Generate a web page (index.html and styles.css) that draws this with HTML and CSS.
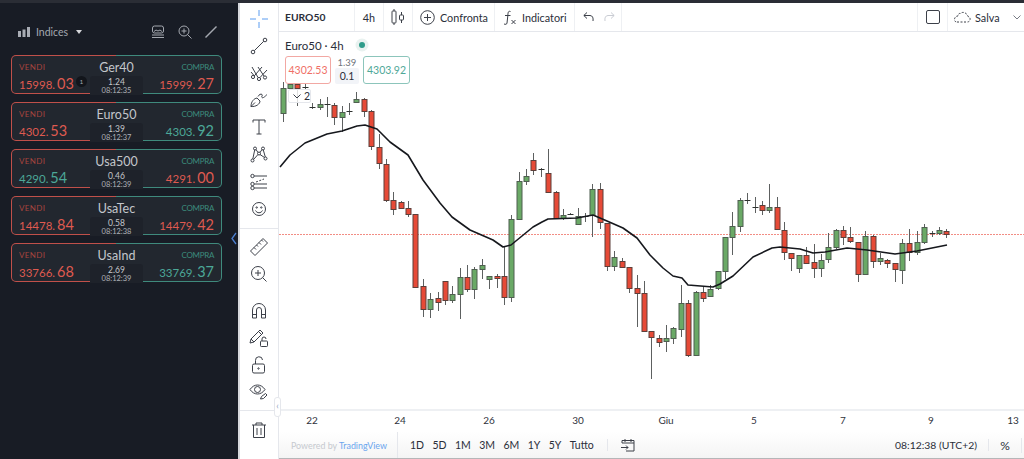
FILE: index.html
```html
<!DOCTYPE html>
<html lang="en">
<head>
  <meta charset="UTF-8">
  <title>Indices | Euro50</title>
  <link rel="stylesheet" href="styles.css">
</head>
<body>
  <div class="topstrip"></div>
  <div class="app">

    <!-- quotes panel -->
    <aside class="panel">
      <div class="panel-head">
        <svg class="bars" width="12" height="10" viewBox="0 0 12 10"><path d="M0 4h3v6H0zM4.5 2.5h3V10h-3zM9 0h3v10H9z"/></svg>
        <span class="panel-title">Indices</span>
        <span class="caret"></span>
        <div class="panel-icons">
          <svg class="dark-icon" width="14" height="14" viewBox="0 0 14 14"><rect x="1.5" y="1" width="11" height="7" rx="2"/><path d="M3 6.500l2-1.500 2 1 2-1 2 1.500M1 10h12M1 12.500h12"/></svg>
          <svg class="dark-icon" width="14" height="14" viewBox="0 0 14 14"><circle cx="6" cy="6" r="5"/><path d="M6 3.500v5M3.500 6h5M9.500 9.500l4 4"/></svg>
          <svg class="dark-icon" width="12" height="12" viewBox="0 0 12 12"><path d="M.5 11.500l11-11" stroke-width="1.400"/></svg>
        </div>
      </div>

      <div class="card">
        <div class="side">
          <span class="label sell">VENDI</span>
          <span class="price down">15998. <b>03</b></span>
        </div>
        <div class="mid">
          <span class="name">Ger40</span>
          <div class="tab"><span class="spread">1.24</span><span class="clock">08:12:35</span></div>
        </div>
        <div class="side right">
          <span class="label buy">COMPRA</span>
          <span class="price down">15999. <b>27</b></span>
        </div>
        <span class="badge">1</span>
      </div>

      <div class="card">
        <div class="side">
          <span class="label sell">VENDI</span>
          <span class="price down">4302. <b>53</b></span>
        </div>
        <div class="mid">
          <span class="name">Euro50</span>
          <div class="tab"><span class="spread">1.39</span><span class="clock">08:12:37</span></div>
        </div>
        <div class="side right">
          <span class="label buy">COMPRA</span>
          <span class="price up">4303. <b>92</b></span>
        </div>
      </div>

      <div class="card">
        <div class="side">
          <span class="label sell">VENDI</span>
          <span class="price up">4290. <b>54</b></span>
        </div>
        <div class="mid">
          <span class="name">Usa500</span>
          <div class="tab"><span class="spread">0.46</span><span class="clock">08:12:39</span></div>
        </div>
        <div class="side right">
          <span class="label buy">COMPRA</span>
          <span class="price down">4291. <b>00</b></span>
        </div>
      </div>

      <div class="card">
        <div class="side">
          <span class="label sell">VENDI</span>
          <span class="price down">14478. <b>84</b></span>
        </div>
        <div class="mid">
          <span class="name">UsaTec</span>
          <div class="tab"><span class="spread">0.58</span><span class="clock">08:12:38</span></div>
        </div>
        <div class="side right">
          <span class="label buy">COMPRA</span>
          <span class="price down">14479. <b>42</b></span>
        </div>
      </div>

      <div class="card">
        <div class="side">
          <span class="label sell">VENDI</span>
          <span class="price down">33766. <b>68</b></span>
        </div>
        <div class="mid">
          <span class="name">UsaInd</span>
          <div class="tab"><span class="spread">2.69</span><span class="clock">08:12:39</span></div>
        </div>
        <div class="side right">
          <span class="label buy">COMPRA</span>
          <span class="price up">33769. <b>37</b></span>
        </div>
      </div>

      <svg class="panel-toggle" width="6" height="13" viewBox="0 0 6 13"><path d="M5 1L1 6.500 5 12"/></svg>
    </aside>

    <!-- drawing tools -->
    <nav class="tools">
      <div class="tool-group first">
        <div class="tool"><svg class="icon blue" width="18" height="18" viewBox="0 0 18 18"><path d="M9 0v6M9 12v6M0 9h6M12 9h6"/></svg></div>
        <div class="tool"><svg class="icon" width="18" height="18" viewBox="0 0 18 18"><circle cx="3" cy="15" r="1.800"/><circle cx="15" cy="3" r="1.800"/><path d="M4.300 13.700L13.700 4.300"/></svg></div>
        <div class="tool"><svg class="icon" width="18" height="18" viewBox="0 0 18 18"><circle cx="3" cy="13" r="1.600"/><circle cx="9" cy="15" r="1.600"/><circle cx="15" cy="13.500" r="1.600"/><path d="M4 11.500L1 8M4.200 12L12 3M8 13.500L2 3M10 13.500L17 6M14 12L8 3"/></svg></div>
        <div class="tool"><svg class="icon" width="18" height="18" viewBox="0 0 18 18"><path d="M1 15.500c0-5 3-8 6-8.500l3 3c0 3-4 6-9 5.500zM1 15.500l4-4M8 5.500c1-2 3-3 4-2s-1 2 0 3 3-1 5-3"/></svg></div>
        <div class="tool"><svg class="icon" width="18" height="18" viewBox="0 0 18 18"><path d="M3 4.500V2h12v2.500M9 2v14M6.500 16h5"/></svg></div>
        <div class="tool"><svg class="icon" width="18" height="18" viewBox="0 0 18 18"><circle cx="5" cy="2.500" r="1.500"/><circle cx="13" cy="2.500" r="1.500"/><circle cx="2.500" cy="14.500" r="1.500"/><circle cx="15.500" cy="12.500" r="1.500"/><circle cx="9" cy="7.500" r="1.500"/><path d="M4.700 4L2.800 13M6 3.500l2 3M12 3.500l-2 3M13.300 4l2 7M8 8.500l-4.500 5M10 8.500l4.500 3"/></svg></div>
        <div class="tool"><svg class="icon" width="18" height="18" viewBox="0 0 18 18"><circle cx="2.500" cy="3" r="1.700"/><circle cx="2.500" cy="11" r="1.700"/><circle cx="2.500" cy="15" r="1.700"/><path d="M4.200 3H17M4.200 11H17M4.200 15H17"/><path d="M6 9l8-3" stroke-dasharray="2 1.500"/></svg></div>
        <div class="tool"><svg class="icon" width="18" height="18" viewBox="0 0 18 18"><circle cx="9" cy="9" r="6.500"/><circle cx="6.700" cy="7.500" r=".7"/><circle cx="11.300" cy="7.500" r=".7"/><path d="M5.500 10.500c1.500 3 5.500 3 7 0"/></svg></div>
      </div>
      <div class="tool-group second">
        <div class="tool"><svg class="icon" width="20" height="20" viewBox="0 0 20 20"><path d="M1.500 14L14 1.500l4.500 4.500L6 18.500zM5 10.500l2 2M7.500 8l1.500 1.500M10 5.500l2 2M12.500 3l1.500 1.500"/></svg></div>
        <div class="tool"><svg class="icon" width="18" height="18" viewBox="0 0 18 18"><circle cx="8" cy="8" r="6.500"/><path d="M8 5v6M5 8h6M12.800 12.800l3.700 3.700"/></svg></div>
      </div>
      <div class="tool-group third">
        <div class="tool"><svg class="icon" width="16" height="18" viewBox="0 0 16 18"><path d="M1.500 16V8a6.500 6.500 0 0 1 13 0v8h-4V8a2.500 2.500 0 0 0-5 0v8zM1.500 12.500h4M10.500 12.500h4"/></svg></div>
        <div class="tool"><svg class="icon" width="20" height="20" viewBox="0 0 20 20"><path d="M1 15l1-4L11 2l3 3-9 9zM2 11l3 3M9.500 3.500l3 3"/><rect x="11.500" y="13" width="7" height="5.500" rx=".8"/><path d="M13 13v-2a2 2 0 0 1 4 0"/></svg></div>
        <div class="tool"><svg class="icon" width="16" height="18" viewBox="0 0 16 18"><rect x="1.500" y="8" width="12" height="9" rx="1.500"/><path d="M4.500 8V4.500a3.500 3.500 0 0 1 7-.5"/><circle cx="7.500" cy="12.500" r=".7"/></svg></div>
        <div class="tool"><svg class="icon" width="20" height="20" viewBox="0 0 20 20"><path d="M1 7.500c4-6 11-6 15 0-4 6-11 6-15 0z"/><circle cx="8.500" cy="7.500" r="3"/><path d="M11.500 17l1-2.500 4-3 1.500 1.500-3.500 3.500z"/></svg></div>
      </div>
      <div class="tool-group last">
        <div class="tool"><svg class="icon" width="16" height="18" viewBox="0 0 16 18"><path d="M1 4h14M5 4V2h6v2M2.500 4v12.500h11V4M6 7v7M10 7v7"/></svg></div>
      </div>
    </nav>

    <main class="workspace">
      <header class="topbar">
        <div class="seg seg-symbol">EURO50</div>
        <div class="seg seg-res">4h</div>
        <div class="seg seg-type">
          <svg class="icon" width="14" height="18" viewBox="0 0 14 18"><path d="M3 1v2M3 15v2M10.500 4v3M10.500 12v3"/><rect x="1" y="3" width="4" height="12" rx=".8"/><rect x="8.500" y="7" width="4" height="5" rx=".8"/></svg>
        </div>
        <div class="seg seg-compare">
          <svg class="icon" width="15" height="15" viewBox="0 0 15 15"><circle cx="7.500" cy="7.500" r="6.800"/><path d="M7.500 4v7M4 7.500h7"/></svg>
          <span>Confronta</span>
        </div>
        <div class="seg seg-ind">
          <svg class="icon" width="14" height="15" viewBox="0 0 14 15"><path d="M7.500 1.500C5 .5 5 3 4.800 6L4 13c-.2 1.500-1.500 1.500-3 1M2 5.500h5.500M8.500 10l4 4M12.500 10l-4 4"/></svg>
          <span>Indicatori</span>
        </div>
        <div class="seg seg-undo">
          <svg class="icon" width="11" height="10" viewBox="0 0 11 10"><path d="M4 .5L.8 3.500 4 6.500M1 3.500h6c2.500 0 3.500 2.500 3 5.500"/></svg>
          <svg class="icon faint" width="11" height="10" viewBox="0 0 11 10"><path d="M7 .5l3.200 3L7 6.500M10 3.500H4C1.500 3.500.5 6 1 9"/></svg>
        </div>
        <div class="seg seg-gap"></div>
        <div class="seg seg-square"><span class="square"></span></div>
        <div class="seg seg-save">
          <svg class="icon" width="18" height="12" viewBox="0 0 18 12"><path d="M4 11h10c4 0 4-5 1-5.500C14 2 10 0 7.500 2.500 6 2 5 3.500 5 5 1 5 0 11 4 11z" stroke-dasharray="2 1.500"/></svg>
          <span>Salva</span>
          <svg class="icon chev" width="8" height="5" viewBox="0 0 8 5"><path d="M.5.500L4 4 7.500.500"/></svg>
        </div>
      </header>

      <div class="chart-wrap">
        <svg id="chart" class="chart" viewBox="279 32 745 400" width="745" height="400">
          <path class="last-price" d="M279 234.500H1024"/>
          <g id="candles"></g>
          <path class="ma" d="M280 167L290 155 305 143 327 134 342 131 357 126 365 125 377 129 390 142 408 155 423 180 440 203 452 217 470 230 493 240 503 247 511 245 533 227 542 222 548 219 577 218 593 215 607 221 623 228 637 238 650 255 663 268 673 276 682 278 688 285 713 287 720 284 733 276 753 257 772 248 780 247 800 249 813 253 825 252 847 248 867 250 895 254 917 251 947 245"/>
          <path class="axis-line" d="M279 410H1024"/>
          <g class="axis">
            <text x="312" y="424">22</text>
            <text x="400" y="424">24</text>
            <text x="489" y="424">26</text>
            <text x="578" y="424">30</text>
            <text x="666" y="424">Giu</text>
            <text x="754" y="424">5</text>
            <text x="843" y="424">7</text>
            <text x="931" y="424">9</text>
            <text x="1013" y="424">13</text>
          </g>
        </svg>

        <div class="legend">
          <div class="legend-title">
            <span>Euro50 · 4h</span>
            <span class="status"></span>
          </div>
          <div class="legend-quote">
            <div class="quote-box quote-sell">4302.53</div>
            <div class="quote-mid">
              <span class="quote-spread">1.39</span>
              <span class="quote-size">0.1</span>
            </div>
            <div class="quote-box quote-buy">4303.92</div>
          </div>
          <div class="legend-fold">
            <svg class="icon" width="8" height="5" viewBox="0 0 8 5"><path d="M.5.500L4 4 7.500.500"/></svg>
            <span>2</span>
          </div>
        </div>
        <span class="tools-toggle">‹</span>
      </div>

      <footer class="bottombar">
        <div class="powered">Powered by <span>TradingView</span></div>
        <div class="ranges">
          <span>1D</span><span>5D</span><span>1M</span><span>3M</span><span>6M</span><span>1Y</span><span>5Y</span><span>Tutto</span>
        </div>
        <div class="goto">
          <svg class="icon" width="14" height="14" viewBox="0 0 14 14"><path d="M1 5V2.500h12V13H5M4 1v3M10 1v3M1 5h12M0 9.500h7M5 7.500l2 2-2 2"/></svg>
        </div>
        <div class="time">08:12:38 (UTC+2)</div>
        <div class="percent">%</div>
      </footer>
    </main>
  </div>
  <script src="chart.js"></script>
</body>
</html>
```

FILE: styles.css
```css
* { box-sizing: border-box; }

body {
  margin: 0;
  height: 459px;
  overflow: hidden;
  font-family: Lato, "Liberation Sans", sans-serif;
  color: #2a2e39;
  background: #fff;
}
.topstrip { height: 3px; background: #2a2d35; }
.app { display: flex; height: 456px; }

/* quotes panel */
.panel {
  position: relative;
  width: 238px;
  flex: none;
  padding: 0 16px 0 11px;
  background: #181c25;
}
.panel-head {
  display: flex;
  align-items: center;
  height: 52px;
  padding: 6px 0 0 7px;
}
.bars { fill: #a9adb5; }
.panel-title { margin-left: 6px; font-size: 10.5px; color: #a4a8b0; }
.caret {
  margin-left: 8px;
  border-left: 3.5px solid transparent;
  border-right: 3.5px solid transparent;
  border-top: 4px solid #d5d7db;
}
.panel-icons { display: flex; align-items: center; gap: 13px; margin-left: auto; padding-right: 5px; }
.dark-icon { fill: none; stroke: #a4a8b0; stroke-width: 1; }

.card {
  position: relative;
  display: flex;
  height: 39px;
  margin-bottom: 8px;
  border: 1px solid transparent;
  border-radius: 5px;
  background:
    linear-gradient(#22272f, #22272f) padding-box,
    linear-gradient(90deg, #c0504a 50%, #3f8a7d 50%) border-box;
}
.side { flex: 1; display: flex; flex-direction: column; padding: 6px 7px 0 7px; }
.side.right { align-items: flex-end; }
.label { font-size: 8px; line-height: 11px; }
.sell { color: #a8443e; letter-spacing: .4px; }
.buy { color: #3c8c7d; letter-spacing: -.3px; }
.price { font-size: 11.5px; line-height: 20px; margin-top: 1px; white-space: pre; word-spacing: -1px; }
.price b { font-size: 14.5px; font-weight: 400; }
.down { color: #df5a50; }
.up { color: #4ca898; }
.mid { width: 53px; flex: none; display: flex; flex-direction: column; align-items: center; }
.name { font-size: 12.5px; line-height: 17px; color: #c3c6cb; white-space: nowrap; margin-top: 3px; }
.tab {
  display: flex;
  flex-direction: column;
  align-items: center;
  width: 53px;
  height: 19px;
  margin-bottom: -1px;
  padding-top: 1px;
  border-radius: 3px 3px 0 0;
  background: #1e222a;
}
.spread { font-size: 8.5px; line-height: 10px; color: #c3c6cb; }
.clock { font-size: 7.5px; line-height: 8px; color: #b0b3b9; }
.badge {
  position: absolute;
  left: 64px;
  top: 20px;
  width: 11px;
  height: 11px;
  border-radius: 50%;
  background: #12151b;
  color: #a4a8b0;
  font-size: 6.5px;
  line-height: 11px;
  text-align: center;
}
.panel-toggle { position: absolute; right: 1px; top: 229px; fill: none; stroke: #4b7fd0; stroke-width: 1.3; }

/* drawing tools */
.tools {
  display: flex;
  flex-direction: column;
  width: 41px;
  flex: none;
  border-left: 2px solid #d7d9dd;
  border-right: 1px solid #e5e7ec;
}
.tool { display: flex; align-items: center; justify-content: center; height: 27.2px; }
.tool-group.first { padding: 2px 0 5.4px; border-bottom: 1px solid #e5e7ec; }
.tool-group.second { padding: 4.4px 0 0; }
.tool-group.third { margin-top: 9.6px; padding-bottom: 4px; border-bottom: 1px solid #e5e7ec; }
.tool-group.last { padding-top: 5px; }
.icon { fill: none; stroke: #3c4049; stroke-width: 1; flex: none; }
.icon.blue { stroke: #5b9cf0; }
.icon.faint { stroke: #c9ccd3; }

/* chart area */
.workspace { flex: 1; display: flex; flex-direction: column; min-width: 0; }
.topbar {
  display: flex;
  height: 29px;
  flex: none;
  border-bottom: 1px solid #e5e7ec;
  font-size: 10.8px;
}
.seg { display: flex; align-items: center; height: 100%; border-right: 1px solid #eef0f3; }
.seg-symbol { width: 76px; padding-left: 6px; font-weight: 700; font-size: 10.3px; }
.seg-res { width: 29px; justify-content: center; }
.seg-type { width: 29px; justify-content: center; }
.seg-compare { width: 82px; padding-left: 7px; gap: 5px; }
.seg-ind { width: 80px; padding-left: 8px; gap: 5px; }
.seg-undo { width: 47px; padding-left: 8px; gap: 10px; }
.seg-gap { width: 296px; }
.seg-square { width: 30px; justify-content: center; }
.square { width: 14px; height: 14px; border: 1px solid #3c4049; border-radius: 2px; }
.seg-save { flex: 1; padding-left: 5px; gap: 4px; border-right: none; }
.chev { margin-left: 9px; stroke: #787b84; }

.chart-wrap { position: relative; flex: 1; min-height: 0; }
.chart { display: block; }
.last-price { stroke: #f28d84; stroke-width: 1; stroke-dasharray: 2 1; }
.ma { fill: none; stroke: #16181d; stroke-width: 1.6; stroke-linejoin: round; }
.wick { stroke: #5d6060; stroke-width: 1; }
.body-up { fill: #6aa966; stroke: #4f5f50; stroke-width: 1; }
.body-down { fill: #e64a37; stroke: #5c3f3a; stroke-width: 1; }
.doji { stroke: #2f3230; stroke-width: 1; }
.axis-line { stroke: #eef0f3; stroke-width: 2; }
.axis text { font-size: 10px; fill: #2f333c; text-anchor: middle; }

/* legend sits over the candles */
.legend { position: absolute; left: 6px; top: 0; }
.legend-title { display: flex; align-items: center; gap: 15px; height: 24px; padding-top: 2px; font-size: 11.5px; }
.status { width: 6px; height: 6px; border-radius: 50%; background: #2f9c8a; box-shadow: 0 0 0 3.500px #e9f2f0; }
.legend-quote { display: flex; gap: 4px; }
.quote-box {
  width: 47px;
  height: 28px;
  border: 1px solid;
  border-radius: 3px;
  background: #fff;
  font-size: 10.5px;
  line-height: 26px;
  text-align: center;
}
.quote-sell { width: 46px; border-color: #f2a8a3; color: #ef6f66; }
.quote-buy { border-color: #8cc5bb; color: #4fa898; }
.quote-mid { display: flex; flex-direction: column; align-items: center; width: 24px; }
.quote-spread { font-size: 9.5px; line-height: 11px; color: #70747c; margin-top: 1px; }
.quote-size {
  width: 24px;
  height: 16px;
  background: #f2f4f8;
  border-radius: 2px;
  font-size: 10.5px;
  line-height: 16px;
  text-align: center;
}
.legend-fold {
  display: flex;
  align-items: center;
  gap: 3px;
  width: 23px;
  height: 14px;
  margin: 5px 0 0 3px;
  padding-left: 4px;
  border: 1px solid #e5e7ec;
  border-radius: 2px;
  background: rgba(255, 255, 255, .8);
  font-size: 10.5px;
}
.tools-toggle {
  position: absolute;
  left: -5px;
  top: 365px;
  width: 7px;
  height: 20px;
  border: 1px solid #e5e7ec;
  border-radius: 3px;
  background: #fff;
  color: #8ea3c0;
  font-size: 9px;
  line-height: 16px;
  text-align: center;
}

.bottombar {
  display: flex;
  align-items: center;
  height: 27px;
  flex: none;
  border-bottom: 1px solid #b5b6b8;
  background: linear-gradient(#fff, #f4f4f4);
  font-size: 10.5px;
}
.powered {
  display: flex;
  align-items: center;
  gap: 2px;
  width: 119px;
  height: 100%;
  padding-left: 12px;
  border-right: 1px solid #e5e7ec;
  font-size: 8.9px;
  color: #c6c9cf;
  white-space: nowrap;
}
.powered span { color: #6aa5ee; }
.ranges { display: flex; gap: 8.4px; width: 210px; padding-left: 12px; border-right: 1px solid #e5e7ec; }
.goto { padding-left: 13px; display: flex; }
.time { margin-left: auto; width: 94px; border-right: 1px solid #e5e7ec; font-size: 10.4px; white-space: nowrap; }
.percent { width: 33px; text-align: center; font-size: 12px; border-right: 1px solid #e5e7ec; margin-right: 2px; }
```

FILE: chart.js
```js
// wick top, wick bottom, body top, body bottom, u = up, d = down, 0 = no body
var candles = [
  [82,122,88,113,'u'],[80,88,84,88,'u'],[80,106,84,88,'d'],[84,90,87,87,0],[103,109,107,107,0],
  [99,110,104,107,'u'],[97,117,104,104,0],[103,125,105,117,'d'],[106,132,112,117,'u'],[103,115,111,111,0],
  [92,102,99,102,'u'],[98,117,99,111,'d'],[110,150,111,146,'d'],[134,169,147,163,'d'],[159,202,164,200,'d'],
  [192,215,200,209,'d'],[201,208,202,208,'d'],[201,217,208,214,'d'],[214,287,214,287,'d'],[279,317,286,309,'d'],
  [293,318,299,309,'u'],[292,311,298,302,'d'],[281,305,281,300,'d'],[286,303,294,300,'u'],[268,319,277,294,'u'],
  [265,292,277,289,'d'],[267,299,269,289,'u'],[259,279,265,269,'u'],[276,289,276,279,'u'],[274,288,276,278,'d'],
  [247,305,276,297,'d'],[215,302,219,297,'u'],[172,219,181,219,'u'],[169,185,176,181,'u'],[153,175,160,170,'d'],
  [168,177,169,169,0],[149,192,173,192,'d'],[191,218,192,218,'d'],[209,220,215,218,'u'],[213,215,214,214,0],
  [208,224,216,224,'u'],[213,222,216,216,0],[184,237,189,215,'u'],[183,229,189,222,'d'],[223,271,223,266,'d'],
  [251,271,257,266,'u'],[258,267,261,267,'d'],[267,293,267,288,'d'],[275,327,288,293,'d'],[281,331,293,331,'d'],
  [331,379,331,337,'d'],[335,347,338,342,'d'],[325,352,338,341,'u'],[327,344,328,338,'u'],[285,337,303,329,'u'],
  [300,357,303,355,'d'],[291,355,292,355,'u'],[287,302,292,298,'d'],[285,296,289,296,'u'],[271,290,271,288,'u'],
  [237,279,237,271,'u'],[212,255,226,237,'u'],[198,232,200,226,'u'],[193,204,200,200,0],[197,213,207,207,0],
  [201,215,205,210,'d'],[184,213,207,210,'u'],[197,229,207,229,'d'],[222,260,230,252,'d'],[253,271,253,258,'d'],
  [255,273,255,268,'u'],[247,264,255,263,'d'],[244,278,262,268,'d'],[254,277,260,268,'u'],[233,263,247,259,'u'],
  [229,249,230,247,'u'],[226,245,230,237,'d'],[227,243,237,241,'d'],[242,282,242,274,'d'],[231,274,236,274,'u'],
  [235,268,236,261,'d'],[253,265,258,261,'u'],[259,268,260,263,'d'],[263,282,263,269,'d'],[239,284,243,270,'u'],
  [229,261,243,252,'d'],[231,255,242,252,'u'],[224,244,227,242,'u'],[231,237,233,233,0],[227,235,230,233,'u'],
  [229,238,231,234,'d']
];

var group = document.getElementById("candles");

function add(tag, attrs) {
  var el = document.createElementNS("http://www.w3.org/2000/svg", tag);
  for (var key in attrs) el.setAttribute(key, attrs[key]);
  group.appendChild(el);
}

for (var i = 0; i < candles.length; i++) {
  var c = candles[i];
  var x = Math.round(282.7 + i * 7.373) + 0.5;
  add("line", { "class": "wick", x1: x, x2: x, y1: c[0], y2: c[1] });
  if (c[4]) {
    add("rect", {
      "class": c[4] == "u" ? "body-up" : "body-down",
      x: x - 2.5, y: c[2] + 0.5, width: 5, height: c[3] - c[2]
    });
  } else {
    add("line", { "class": "doji", x1: x - 3, x2: x + 3, y1: c[2] + 0.5, y2: c[2] + 0.5 });
  }
}
```
